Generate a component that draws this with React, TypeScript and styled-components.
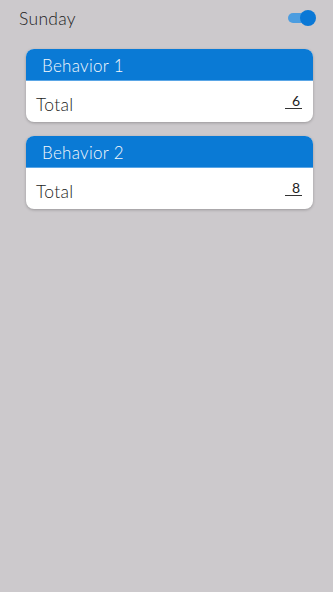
import { FC } from 'react';
import styled, { createGlobalStyle } from 'styled-components';

type Behavior = { name: string; total: number };

const behaviors: Behavior[] = [
	{ name: 'Behavior 1', total: 6 },
	{ name: 'Behavior 2', total: 8 },
];

const App: FC = () => (
	<>
		<GlobalStyle />
		<Screen>
			<DayRow>
				<DayLabel>Sunday</DayLabel>
				<Toggle aria-label="toggle">
					<ToggleTrack />
					<ToggleThumb />
				</Toggle>
			</DayRow>
			<CardList>
				{behaviors.map((b) => (
					<Card key={b.name}>
						<CardHeader>{b.name}</CardHeader>
						<CardBody>
							<TotalLabel>Total</TotalLabel>
							<TotalValue>{b.total}</TotalValue>
						</CardBody>
					</Card>
				))}
			</CardList>
		</Screen>
	</>
);

export default App;

const GlobalStyle = createGlobalStyle`
	html, body {
		margin: 0;
		padding: 0;
		background: #ccc9cc;
	}
	body {
		font-family: Lato, 'Open Sans', sans-serif;
		font-weight: 300;
	}
`;

const Screen = styled.div`
	width: 333px;
	height: 592px;
	background: #ccc9cc;
	box-sizing: border-box;
`;

const DayRow = styled.div`
	display: flex;
	align-items: center;
	justify-content: space-between;
	height: 32px;
	padding: 2px 17px 0 19px;
`;

const DayLabel = styled.div`
	font-size: 17.5px;
	color: #1c1c1c;
	letter-spacing: 0.3px;
`;

const Toggle = styled.div`
	position: relative;
	width: 28px;
	height: 16px;
`;

const ToggleTrack = styled.div`
	position: absolute;
	left: 0;
	top: 3px;
	width: 24px;
	height: 10px;
	border-radius: 5px;
	background: #4c9de0;
`;

const ToggleThumb = styled.div`
	position: absolute;
	right: 0;
	top: 0;
	width: 16px;
	height: 16px;
	border-radius: 50%;
	background: #0a78d6;
`;

const CardList = styled.div`
	display: flex;
	flex-direction: column;
	gap: 14px;
	margin: 15px 20px 0 26px;
`;

const Card = styled.div`
	border-radius: 8px;
	overflow: hidden;
	background: #fff;
	box-shadow: 0 1px 3px rgba(0, 0, 0, 0.25);
`;

const CardHeader = styled.div`
	height: 32px;
	display: flex;
	align-items: center;
	padding: 2px 0 0 16px;
	box-sizing: border-box;
	background: #0a7ad5;
	color: #f4f8fc;
	font-size: 17px;
	letter-spacing: 0.3px;
	border-bottom: 1px solid #5aa6e6;
`;

const CardBody = styled.div`
	height: 41px;
	display: flex;
	align-items: center;
	justify-content: space-between;
	padding: 6px 11px 0 10px;
	box-sizing: border-box;
`;

const TotalLabel = styled.div`
	font-size: 17.5px;
	color: #1c1c1c;
	letter-spacing: 0.3px;
`;

const TotalValue = styled.div`
	width: 17px;
	text-align: right;
	padding-right: 2px;
	box-sizing: border-box;
	font-size: 14px;
	font-weight: 400;
	line-height: 14px;
	color: #222;
	border-bottom: 1px solid #333;
	margin-bottom: 6px;
`;
